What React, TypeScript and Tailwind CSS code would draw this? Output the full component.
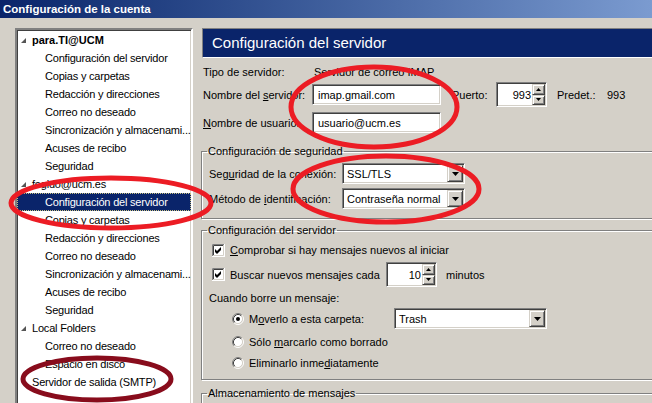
import React from "react";

const sunken =
  "border border-t-[#808080] border-l-[#808080] border-b-white border-r-white shadow-[inset_1px_1px_0_#404040,inset_-1px_-1px_0_#d4d0c8]";
const raised =
  "border border-t-[#d4d0c8] border-l-[#d4d0c8] border-b-[#404040] border-r-[#404040] shadow-[inset_1px_1px_0_#ffffff,inset_-1px_-1px_0_#808080]";
const etched =
  "border border-[#808080] shadow-[inset_1px_1px_0_#ffffff,1px_1px_0_#ffffff]";

function Tri() {
  return (
    <svg width="5" height="5" viewBox="0 0 5 5" className="flex-none">
      <polygon points="5,0 5,5 0,5" fill="#555555" />
    </svg>
  );
}

function TreeParent({ label, bold }: { label: string; bold?: boolean }) {
  return (
    <div className="h-[18px] flex items-center pl-[4px] whitespace-nowrap">
      <Tri />
      <span className={`ml-[6px] ${bold ? "font-bold tracking-normal" : ""}`}>{label}</span>
    </div>
  );
}

function TreeChild({ label, selected }: { label: string; selected?: boolean }) {
  return (
    <div
      className={`h-[18px] flex items-center pl-[28px] whitespace-nowrap overflow-hidden ${
        selected
          ? "bg-[#0a246a] text-white outline outline-1 outline-dotted outline-[#c8c080] -outline-offset-1"
          : ""
      }`}
    >
      {label}
    </div>
  );
}

function SpinBox({ value, className }: { value: string; className: string }) {
  return (
    <div className={`${sunken} ${className} bg-white flex p-[1px]`}>
      <div className="flex-1 flex items-center justify-end pr-[1px]">{value}</div>
      <div className="flex flex-col w-[13px] h-full">
        <div className={`${raised} flex-1 flex items-center justify-center bg-[#d4d0c8]`}>
          <svg width="5" height="3" viewBox="0 0 5 3">
            <polygon points="2.5,0 5,3 0,3" fill="#000" />
          </svg>
        </div>
        <div className={`${raised} flex-1 flex items-center justify-center bg-[#d4d0c8]`}>
          <svg width="5" height="3" viewBox="0 0 5 3">
            <polygon points="0,0 5,0 2.5,3" fill="#000" />
          </svg>
        </div>
      </div>
    </div>
  );
}

function Combo({ value, className }: { value: string; className: string }) {
  return (
    <div className={`${sunken} ${className} bg-white flex items-center p-[1px]`}>
      <div className="flex-1 pl-[3px] whitespace-nowrap overflow-hidden">{value}</div>
      <div className={`${raised} w-[16px] h-full bg-[#d4d0c8] flex items-center justify-center`}>
        <svg width="7" height="4" viewBox="0 0 7 4">
          <polygon points="0,0 7,0 3.5,4" fill="#000" />
        </svg>
      </div>
    </div>
  );
}

function TextBox({ value }: { value: string }) {
  return (
    <div className={`${sunken} w-[129px] h-[21px] bg-white flex items-center pl-[5px]`}>
      {value}
    </div>
  );
}

function CheckBox() {
  return (
    <svg width="13" height="13" viewBox="0 0 13 13" className="flex-none">
      <rect x="0" y="0" width="13" height="13" fill="#ffffff" />
      <path d="M0.5 12 V0.5 H12" stroke="#808080" fill="none" />
      <path d="M1.5 11 V1.5 H11" stroke="#404040" fill="none" />
      <path d="M0 12.5 H12.5 V0" stroke="#ffffff" fill="none" />
      <path d="M1 11.5 H11.5 V1" stroke="#d4d0c8" fill="none" />
      <polygon points="3,5 5,7 9,3 9,6 5,10 3,8" fill="#000" />
    </svg>
  );
}

function Radio({ checked }: { checked?: boolean }) {
  return (
    <svg width="12" height="12" viewBox="0 0 12 12" className="flex-none">
      <circle cx="6" cy="6" r="4.5" fill="#ffffff" />
      <path d="M2.11 9.89 A5.5 5.5 0 0 1 9.89 2.11" stroke="#808080" fill="none" />
      <path d="M9.89 2.11 A5.5 5.5 0 0 1 2.11 9.89" stroke="#ffffff" fill="none" />
      <path d="M2.82 9.18 A4.5 4.5 0 0 1 9.18 2.82" stroke="#404040" fill="none" />
      <path d="M9.18 2.82 A4.5 4.5 0 0 1 2.82 9.18" stroke="#d4d0c8" fill="none" />
      {checked && <circle cx="6" cy="6" r="2" fill="#000" />}
    </svg>
  );
}

export default function App() {
  return (
    <div className="relative w-[652px] h-[403px] overflow-hidden bg-[#d4d0c8] text-black text-[11px] leading-[14px] font-['Liberation_Sans',Arial,sans-serif]">
      {/* Title bar */}
      <div className="h-[18px] flex items-center pl-[3px] bg-gradient-to-r from-[#0a246a] to-[#7b9bd0] text-white font-bold text-[11.5px]">
        Configuración de la cuenta
      </div>

      <div className="flex items-start pt-[10px]">
        {/* Tree */}
        <div className={`${sunken} border-2 ml-[15px] w-[178px] h-[390px] flex-none bg-white pt-[1px] tracking-[-0.2px]`}>
          <TreeParent label="para.TI@UCM" bold />
          <TreeChild label="Configuración del servidor" />
          <TreeChild label="Copias y carpetas" />
          <TreeChild label="Redacción y direcciones" />
          <TreeChild label="Correo no deseado" />
          <TreeChild label="Sincronización y almacenami..." />
          <TreeChild label="Acuses de recibo" />
          <TreeChild label="Seguridad" />
          <TreeParent label="fogido@ucm.es" />
          <TreeChild label="Configuración del servidor" selected />
          <TreeChild label="Copias y carpetas" />
          <TreeChild label="Redacción y direcciones" />
          <TreeChild label="Correo no deseado" />
          <TreeChild label="Sincronización y almacenami..." />
          <TreeChild label="Acuses de recibo" />
          <TreeChild label="Seguridad" />
          <TreeParent label="Local Folders" />
          <TreeChild label="Correo no deseado" />
          <TreeChild label="Espacio en disco" />
          <div className="h-[18px] flex items-center pl-[15px] whitespace-nowrap">
            Servidor de salida (SMTP)
          </div>
        </div>

        {/* Right panel */}
        <div className="ml-[8px] w-[480px] flex-none flex flex-col">
          <div className="ml-[1px] h-[30px] flex items-center pl-[9px] bg-[#0a246a] text-white text-[15px] border border-t-[#808080] border-l-[#808080] border-b-white border-r-white">
            Configuración del servidor
          </div>

          <div className="ml-[2px] mt-[7px] h-[14px] flex items-center whitespace-nowrap">
            <span className="w-[111px] flex-none">Tipo de servidor:</span>
            <span>Servidor de correo IMAP</span>
          </div>

          <div className="ml-[2px] mt-[3px] h-[25px] flex items-center whitespace-nowrap">
            <span className="w-[109px] flex-none">
              Nombre del <u>s</u>ervidor:
            </span>
            <TextBox value="imap.gmail.com" />
            <span className="ml-[11px] w-[44px] flex-none">Puerto:</span>
            <SpinBox value="993" className="w-[51px] h-[25px] flex-none" />
            <span className="ml-[10px] w-[50px] flex-none">Predet.:</span>
            <span>993</span>
          </div>

          <div className="ml-[2px] mt-[5px] h-[21px] flex items-center whitespace-nowrap">
            <span className="w-[109px] flex-none">
              <u>N</u>ombre de usuario:
            </span>
            <TextBox value="usuario@ucm.es" />
          </div>

          {/* Security */}
          <fieldset className={`${etched} mt-[11px] pl-[7px] pb-[9px]`}>
            <legend className="-ml-[2px] px-[1px] leading-[14px]">Configuración de seguridad</legend>
            <div className="mt-[5px] h-[21px] flex items-center whitespace-nowrap">
              <span className="w-[133px] flex-none">
                Seg<u>u</u>ridad de la conexión:
              </span>
              <Combo value="SSL/TLS" className="w-[123px] h-[21px]" />
            </div>
            <div className="mt-[4px] h-[21px] flex items-center whitespace-nowrap">
              <span className="w-[133px] flex-none">
                Método de <u>i</u>dentificación:
              </span>
              <Combo value="Contraseña normal" className="w-[123px] h-[21px]" />
            </div>
          </fieldset>

          {/* Server settings */}
          <fieldset className={`${etched} mt-[4px] pl-[7px] pb-[6px]`}>
            <legend className="-ml-[2px] px-[1px] leading-[14px]">Configuración del servidor</legend>
            <div className="mt-[5px] h-[16px] flex items-center whitespace-nowrap pl-[3px]">
              <CheckBox />
              <span className="ml-[5px]">
                <u>C</u>omprobar si hay mensajes nuevos al iniciar
              </span>
            </div>
            <div className="mt-[4px] h-[25px] flex items-center whitespace-nowrap pl-[3px]">
              <CheckBox />
              <span className="ml-[5px] w-[156px] flex-none">Buscar nuevos mensajes cada</span>
              <SpinBox value="10" className="w-[51px] h-[25px] flex-none" />
              <span className="ml-[9px]">minutos</span>
            </div>
            <div className="mt-[4px] h-[14px] flex items-center whitespace-nowrap">
              Cuando borre un mensaje:
            </div>
            <div className="mt-[3px] h-[21px] flex items-center whitespace-nowrap pl-[23px]">
              <Radio checked />
              <span className="ml-[5px] w-[145px] flex-none">
                M<u>o</u>verlo a esta carpeta:
              </span>
              <Combo value="Trash" className="w-[153px] h-[21px]" />
            </div>
            <div className="mt-[3px] h-[20px] flex items-center whitespace-nowrap pl-[23px]">
              <Radio />
              <span className="ml-[5px]">
                Sólo <u>m</u>arcarlo como borrado
              </span>
            </div>
            <div className="mt-[1px] h-[20px] flex items-center whitespace-nowrap pl-[23px]">
              <Radio />
              <span className="ml-[5px]">
                Eliminarlo inme<u>d</u>iatamente
              </span>
            </div>
          </fieldset>

          <fieldset className={`${etched} mt-[6px] pl-[7px] pb-[20px]`}>
            <legend className="-ml-[2px] px-[1px] leading-[14px]">Almacenamiento de mensajes</legend>
            <div className="h-[20px]" />
          </fieldset>
        </div>
      </div>

      {/* Annotation ellipses */}
      <svg
        className="absolute inset-0 pointer-events-none"
        width="652"
        height="403"
        viewBox="0 0 652 403"
      >
        <ellipse cx="374" cy="107" rx="83" ry="40" fill="none" stroke="#ec1c24" strokeWidth="5" />
        <ellipse cx="386" cy="189" rx="93" ry="33" fill="none" stroke="#ec1c24" strokeWidth="5" />
        <ellipse cx="111" cy="203" rx="100" ry="25" fill="none" stroke="#ec1c24" strokeWidth="5" />
        <ellipse cx="97" cy="379" rx="74" ry="21" fill="none" stroke="#880c1c" strokeWidth="5" />
      </svg>
    </div>
  );
}
